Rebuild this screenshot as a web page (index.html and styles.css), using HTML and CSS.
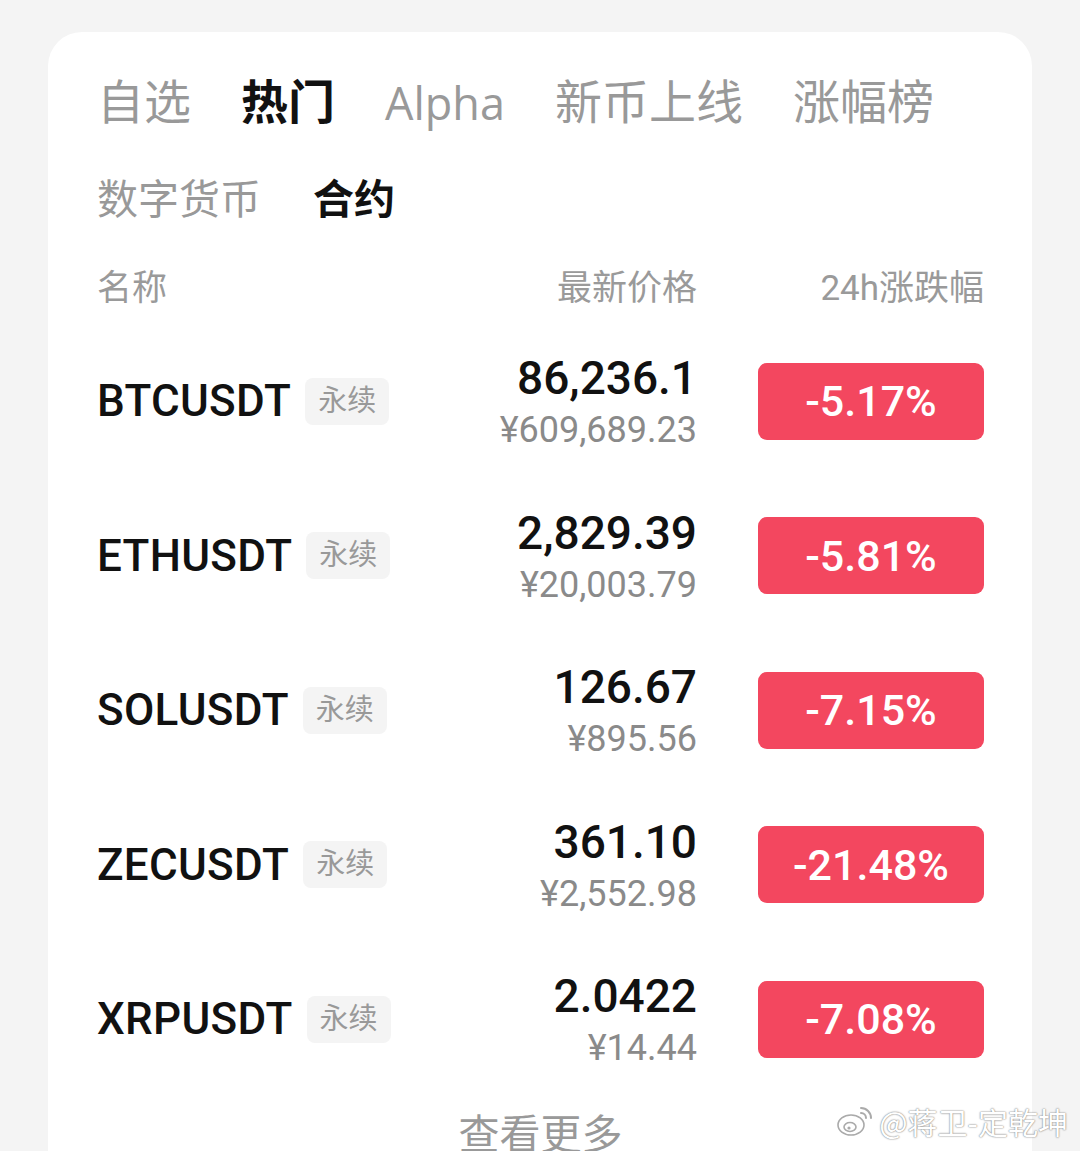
FILE: index.html
```html
<!DOCTYPE html>
<html lang="zh-CN">
<head>
  <meta charset="UTF-8" />
  <meta name="viewport" content="width=device-width, initial-scale=1" />
  <title>热门合约</title>
  <link rel="stylesheet" href="styles.css">
</head>
<body>
  <main class="card">
    <nav class="tabs">
      <span>自选</span>
      <span class="active">热门</span>
      <span class="latin">Alpha</span>
      <span>新币上线</span>
      <span>涨幅榜</span>
    </nav>

    <nav class="subtabs">
      <span>数字货币</span>
      <span class="active">合约</span>
    </nav>

    <div class="row head">
      <span>名称</span>
      <span class="right">最新价格</span>
      <span class="right">24h涨跌幅</span>
    </div>

    <div class="row">
      <div class="name">BTCUSDT <span class="tag">永续</span></div>
      <div class="price">
        <div class="last">86,236.1</div>
        <div class="cny">¥609,689.23</div>
      </div>
      <div class="change">-5.17%</div>
    </div>

    <div class="row">
      <div class="name">ETHUSDT <span class="tag">永续</span></div>
      <div class="price">
        <div class="last">2,829.39</div>
        <div class="cny">¥20,003.79</div>
      </div>
      <div class="change">-5.81%</div>
    </div>

    <div class="row">
      <div class="name">SOLUSDT <span class="tag">永续</span></div>
      <div class="price">
        <div class="last">126.67</div>
        <div class="cny">¥895.56</div>
      </div>
      <div class="change">-7.15%</div>
    </div>

    <div class="row">
      <div class="name">ZECUSDT <span class="tag">永续</span></div>
      <div class="price">
        <div class="last">361.10</div>
        <div class="cny">¥2,552.98</div>
      </div>
      <div class="change">-21.48%</div>
    </div>

    <div class="row">
      <div class="name">XRPUSDT <span class="tag">永续</span></div>
      <div class="price">
        <div class="last">2.0422</div>
        <div class="cny">¥14.44</div>
      </div>
      <div class="change">-7.08%</div>
    </div>

    <div class="more">查看更多</div>
  </main>

  <div class="watermark">
    <svg width="38" height="32" viewBox="0 0 38 32">
      <ellipse cx="14" cy="20" rx="13" ry="10" fill="#fff" stroke="#aaa" stroke-width="1.6"/>
      <ellipse cx="13" cy="22" rx="6" ry="4.5" fill="none" stroke="#aaa" stroke-width="1.6"/>
      <circle cx="12" cy="23" r="1.6" fill="#aaa"/>
      <path d="M24 3 a10 10 0 0 1 10 10" fill="none" stroke="#aaa" stroke-width="2" stroke-linecap="round"/>
      <path d="M24 8 a5 5 0 0 1 5 5" fill="none" stroke="#aaa" stroke-width="2" stroke-linecap="round"/>
    </svg>
    <span>@蒋卫-定乾坤</span>
  </div>
</body>
</html>
```

FILE: styles.css
```css
body {
  margin: 0;
  padding: 32px 48px 0;
  background: #f4f4f4;
  font-family: Roboto, "Noto Sans CJK SC", sans-serif;
  overflow: hidden;
}

.card {
  background: #fff;
  border-radius: 34px 34px 0 0;
  padding: 38px 48px 0 49px;
  height: 1081px;
  overflow: hidden;
}

.tabs {
  display: flex;
  gap: 50px;
  font-size: 47px;
  line-height: 66px;
  color: #999;
}

.tabs .latin {
  font-family: "Open Sans", "Noto Sans", sans-serif;
  font-size: 45px;
}

.active {
  color: #111;
  font-weight: bold;
}

.subtabs {
  display: flex;
  gap: 52px;
  font-size: 41px;
  line-height: 56px;
  margin-top: 36px;
  color: #999;
}

.row {
  display: grid;
  grid-template-columns: 1fr auto 226px;
  column-gap: 61px;
  align-items: center;
  height: 154.5px;
}

.row.head {
  height: 60px;
  margin-top: 26px;
  margin-bottom: 10px;
  font-size: 35px;
  color: #9a9a9a;
}

.right {
  text-align: right;
}

.name {
  display: flex;
  align-items: center;
  gap: 14px;
  font-size: 44px;
  font-weight: 500;
  color: #111;
  letter-spacing: 0.3px;
}

.tag {
  font-size: 29px;
  font-weight: normal;
  color: #999;
  background: #f4f4f4;
  border-radius: 8px;
  padding: 4px 13px;
  line-height: 39px;
  letter-spacing: 0;
}

.price {
  text-align: right;
}

.last {
  font-size: 46px;
  font-weight: 500;
  color: #111;
  line-height: 58px;
}

.cny {
  font-size: 36px;
  color: #8a8a8a;
  line-height: 46px;
}

.change {
  height: 77px;
  border-radius: 9px;
  background: #f3475f;
  color: #fff;
  font-size: 43px;
  font-weight: 500;
  display: flex;
  align-items: center;
  justify-content: center;
}

.more {
  text-align: center;
  font-size: 41px;
  color: #999;
  margin-top: 8px;
  line-height: 60px;
}

.watermark {
  position: absolute;
  right: 12px;
  bottom: 8px;
  display: flex;
  align-items: center;
  gap: 4px;
  font-size: 30px;
  color: #fff;
  text-shadow: 0 0 2px #888, 0 0 1px #888;
  font-family: "Noto Sans CJK SC", sans-serif;
}
```
